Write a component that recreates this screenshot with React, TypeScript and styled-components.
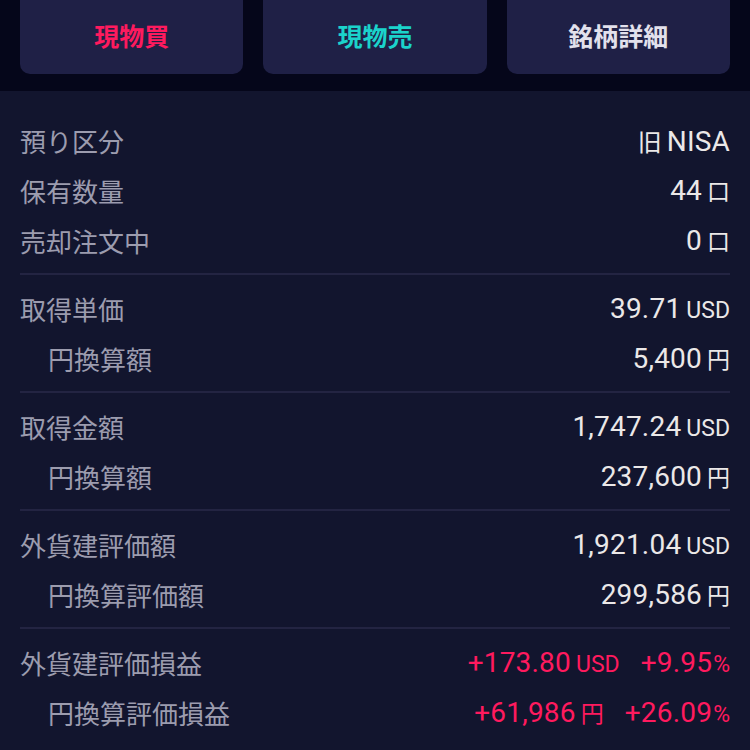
import React from "react";
import styled, { createGlobalStyle } from "styled-components";

const GlobalStyle = createGlobalStyle`
  html, body {
    margin: 0;
    padding: 0;
    background: #12152e;
  }
  body {
    font-family: Roboto, "Noto Sans CJK JP", sans-serif;
  }
`;

const Page = styled.div`
  width: 750px;
  height: 750px;
  overflow: hidden;
  background: #12152e;
`;

const Header = styled.div`
  display: grid;
  grid-template-columns: repeat(3, 1fr);
  gap: 20px;
  padding: 0 20px 17px;
  background: #05061a;
`;

const ActionButton = styled.button<{ $tone: "buy" | "sell" | "plain" }>`
  height: 74px;
  border: none;
  border-radius: 0 0 10px 10px;
  background: #1f2046;
  font-family: "Noto Sans CJK JP", sans-serif;
  font-size: 25px;
  font-weight: 700;
  color: ${(p) =>
    p.$tone === "buy" ? "#ff1a5e" : p.$tone === "sell" ? "#1bd3cb" : "#e2e1ec"};
  padding: 0 0 5px;
  cursor: pointer;
`;

const Content = styled.div`
  padding: 16px 20px 0;
`;

const Group = styled.div`
  padding: 8px 0;
  & + & {
    border-top: 2px solid #232442;
  }
`;

const Row = styled.div`
  height: 50px;
  display: flex;
  align-items: center;
  justify-content: space-between;
`;

const Label = styled.span<{ $sub?: boolean }>`
  font-family: "Noto Sans CJK JP", sans-serif;
  font-size: 26px;
  color: #9c9cae;
  padding-left: ${(p) => (p.$sub ? "28px" : "0")};
`;

const Value = styled.span<{ $red?: boolean }>`
  display: flex;
  align-items: baseline;
  gap: 21px;
  font-family: Roboto, sans-serif;
  font-size: 28px;
  color: ${(p) => (p.$red ? "#ff1a5e" : "#ebe8e8")};
`;

const Num = styled.span`
  letter-spacing: 0.2px;
`;

const Unit = styled.span<{ $cjk?: boolean; $tight?: boolean }>`
  font-family: ${(p) =>
    p.$cjk ? '"Noto Sans CJK JP", sans-serif' : "Roboto, sans-serif"};
  font-size: 23px;
  margin-left: ${(p) => (p.$tight ? "1px" : "5px")};
`;

const Prefix = styled.span`
  font-family: "Noto Sans CJK JP", sans-serif;
  font-size: 24px;
  margin-right: 5px;
`;

type Item = { label: string; sub?: boolean; num: string; unit?: string; cjk?: boolean; pct?: string };

const groups: Item[][] = [
  [
    { label: "預り区分", num: "NISA" },
    { label: "保有数量", num: "44", unit: "口", cjk: true },
    { label: "売却注文中", num: "0", unit: "口", cjk: true },
  ],
  [
    { label: "取得単価", num: "39.71", unit: "USD" },
    { label: "円換算額", sub: true, num: "5,400", unit: "円", cjk: true },
  ],
  [
    { label: "取得金額", num: "1,747.24", unit: "USD" },
    { label: "円換算額", sub: true, num: "237,600", unit: "円", cjk: true },
  ],
  [
    { label: "外貨建評価額", num: "1,921.04", unit: "USD" },
    { label: "円換算評価額", sub: true, num: "299,586", unit: "円", cjk: true },
  ],
  [
    { label: "外貨建評価損益", num: "+173.80", unit: "USD", pct: "+9.95" },
    { label: "円換算評価損益", sub: true, num: "+61,986", unit: "円", cjk: true, pct: "+26.09" },
  ],
];

export default function App() {
  return (
    <Page>
      <GlobalStyle />
      <Header>
        <ActionButton $tone="buy">現物買</ActionButton>
        <ActionButton $tone="sell">現物売</ActionButton>
        <ActionButton $tone="plain">銘柄詳細</ActionButton>
      </Header>
      <Content>
        {groups.map((g, gi) => (
          <Group key={gi}>
            {g.map((it, i) => (
              <Row key={i}>
                <Label $sub={it.sub}>{it.label}</Label>
                <Value $red={!!it.pct}>
                  <span>
                    {it.num === "NISA" && <Prefix>旧</Prefix>}
                    <Num>{it.num}</Num>
                    {it.unit && <Unit $cjk={it.cjk}>{it.unit}</Unit>}
                  </span>
                  {it.pct && (
                    <span>
                      <Num>{it.pct}</Num>
                      <Unit $tight>%</Unit>
                    </span>
                  )}
                </Value>
              </Row>
            ))}
          </Group>
        ))}
      </Content>
    </Page>
  );
}
